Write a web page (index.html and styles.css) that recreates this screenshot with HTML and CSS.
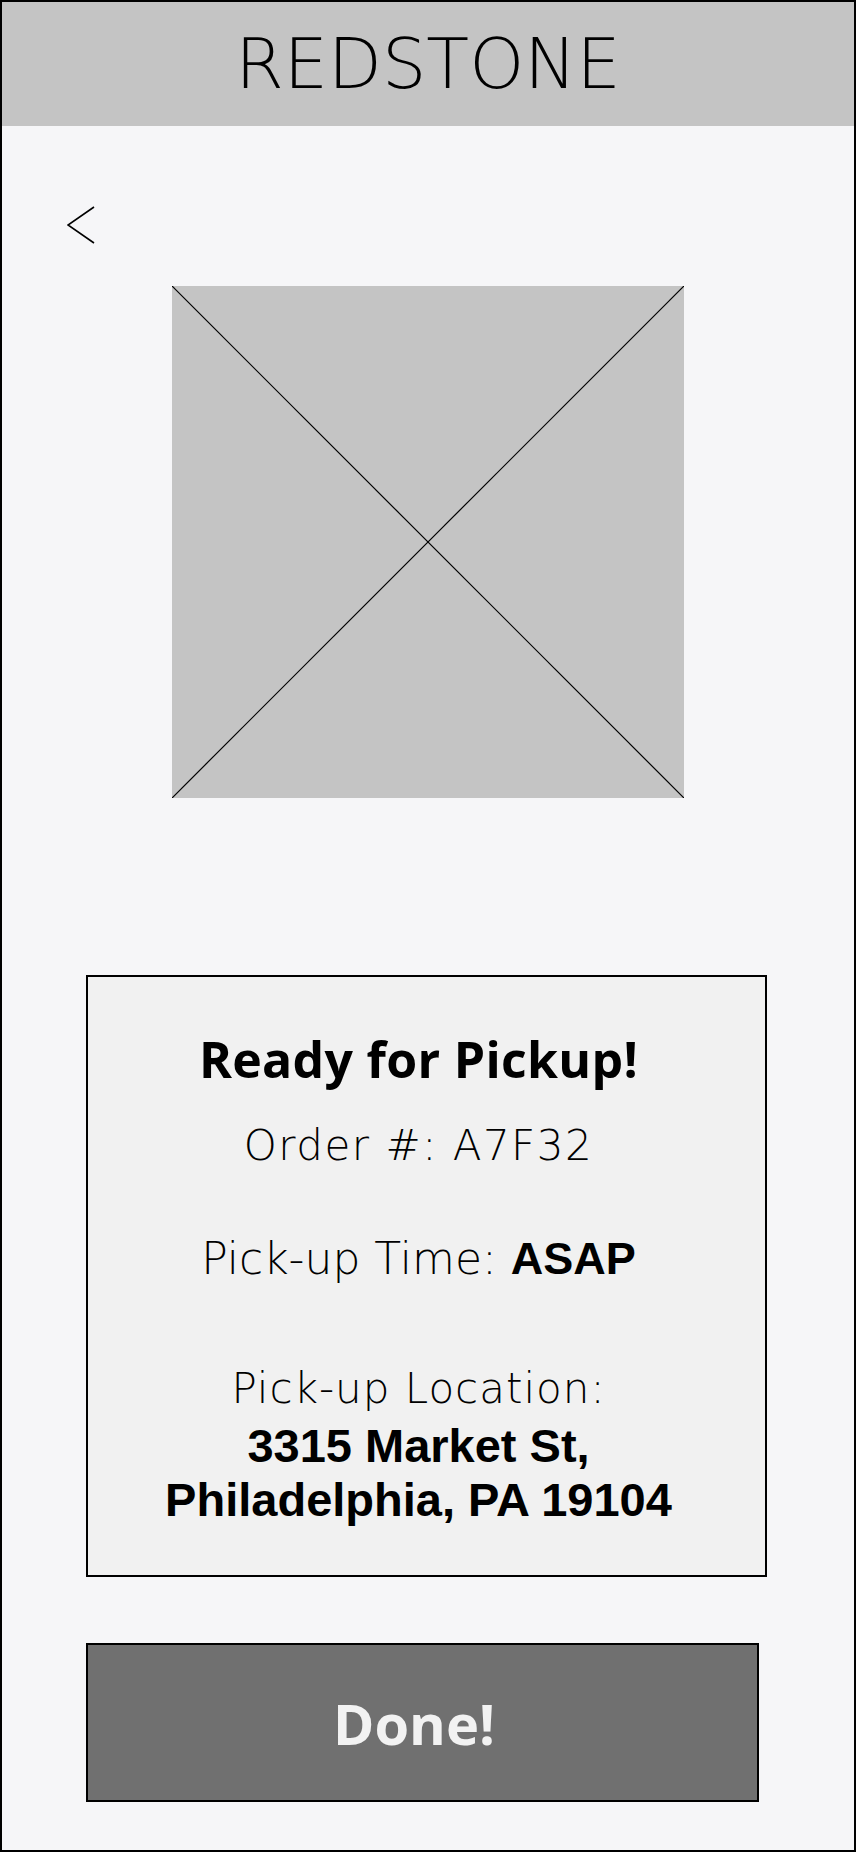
FILE: index.html
```html
<!DOCTYPE html>
<html lang="en">
  <head>
    <meta charset="UTF-8" />
    <meta name="viewport" content="width=device-width, initial-scale=1.0" />
    <title>Redstone - Ready for Pickup</title>
    <link rel="stylesheet" href="styles.css">
  </head>
  <body>
    <div class="screen">
      <header class="topbar">REDSTONE</header>

      <div class="back-row">
        <svg class="back" width="28" height="38" viewBox="0 0 28 38">
          <polyline points="27,1 1,19 27,37" fill="none" stroke="#000" stroke-width="1.6" />
        </svg>
      </div>

      <div class="photo">
        <svg width="512" height="512" viewBox="0 0 512 512">
          <line x1="0" y1="0" x2="512" y2="512" stroke="#000" stroke-width="1.2" />
          <line x1="512" y1="0" x2="0" y2="512" stroke="#000" stroke-width="1.2" />
        </svg>
      </div>

      <div class="order-card">
        <div class="title">Ready for Pickup!</div>
        <div class="line order-no">Order #: A7F32</div>
        <div class="line pick-time">Pick-up Time: <b>ASAP</b></div>
        <div class="line pick-label">Pick-up Location:</div>
        <div class="address">
          3315 Market St,<br />
          Philadelphia, PA 19104
        </div>
      </div>

      <button class="done-btn">Done!</button>
    </div>
  </body>
</html>
```

FILE: styles.css
```css
* {
  margin: 0;
  padding: 0;
  box-sizing: border-box;
}

body {
  background: #f6f6f8;
  font-family: "DejaVu Sans", sans-serif;
  color: #000;
}

.screen {
  width: 856px;
  height: 1852px;
  border: 2px solid #000;
  background: #f6f6f8;
}

.topbar {
  height: 124px;
  line-height: 124px;
  background: #c4c4c4;
  text-align: center;
  font-size: 70px;
  font-weight: 200;
}

.back-row {
  padding: 80px 0 0 65px;
}

.back {
  display: block;
}

.photo {
  width: 512px;
  height: 512px;
  margin: 42px auto 0;
  background: #c4c4c4;
}

.photo svg {
  display: block;
}

.order-card {
  width: 681px;
  height: 602px;
  margin: 177px 0 0 84px;
  padding: 52px 16px 0 0;
  border: 2px solid #000;
  background: #f1f1f1;
  text-align: center;
}

.title {
  font-family: "Open Sans", "Liberation Sans", sans-serif;
  font-weight: 700;
  font-size: 50px;
  line-height: 60px;
  letter-spacing: 0.3px;
}

.line {
  font-weight: 200;
}

.order-no {
  font-size: 42px;
  line-height: 50px;
  letter-spacing: 1.5px;
  margin-top: 32px;
}

.pick-time {
  font-size: 44px;
  line-height: 54px;
  margin-top: 61px;
}

.pick-time b {
  font-family: "Liberation Sans", sans-serif;
  font-weight: 700;
  font-size: 45px;
}

.pick-label {
  font-size: 42px;
  line-height: 40px;
  letter-spacing: 1px;
  margin-top: 83px;
}

.address {
  font-family: "Liberation Sans", sans-serif;
  font-weight: 700;
  font-size: 47px;
  line-height: 54px;
  margin-top: 10px;
}

.done-btn {
  display: block;
  width: 673px;
  height: 159px;
  margin: 66px 0 0 84px;
  padding-right: 17px;
  border: 2px solid #000;
  background: #707070;
  color: #f2f2f2;
  font-family: "Open Sans", "Liberation Sans", sans-serif;
  font-weight: 700;
  font-size: 56px;
  cursor: pointer;
}
```
